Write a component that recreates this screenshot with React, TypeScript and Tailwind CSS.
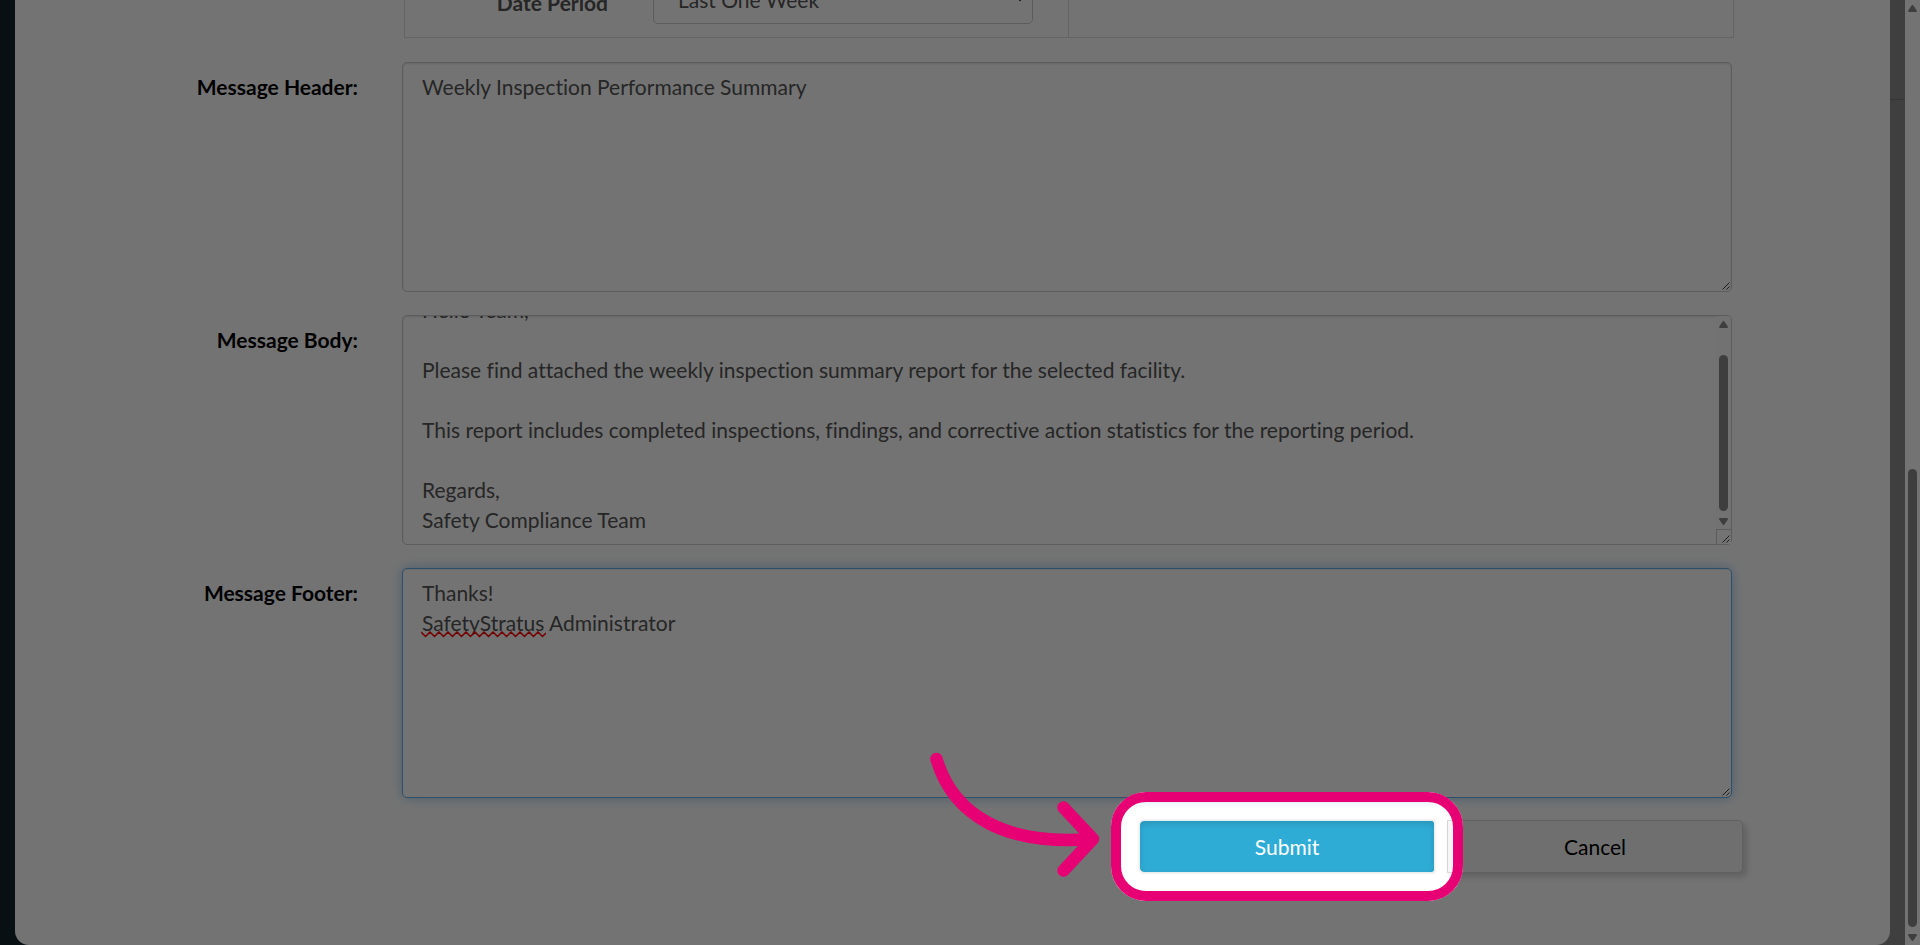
import React, { useEffect, useRef, useState } from "react";

const MESSAGE_BODY = [
  "Hello Team,",
  "",
  "Please find attached the weekly inspection summary report for the selected facility.",
  "",
  "This report includes completed inspections, findings, and corrective action statistics for the reporting period.",
  "",
  "Regards,",
  "Safety Compliance Team",
].join("\n");

const MESSAGE_FOOTER = "Thanks!\nSafetyStratus Administrator";

function ResizeGrip() {
  return (
    <svg
      aria-hidden="true"
      className="absolute right-0.5 bottom-0.5 w-2 h-2 pointer-events-none"
      viewBox="0 0 8 8"
      stroke="#444"
      strokeWidth="1"
    >
      <path d="M0.5 7.5L7.5 0.5M4.5 7.5L7.5 4.5" />
    </svg>
  );
}

function ScrollArrow({ down = false }: { down?: boolean }) {
  return (
    <svg
      aria-hidden="true"
      className={`w-[9px] h-[7px] shrink-0 ${down ? "rotate-180" : ""}`}
      viewBox="0 0 9 7"
      fill="#8b8b8b"
    >
      <path d="M3.6 0.6Q4.5 -0.4 5.4 0.6L8.8 5.4Q9.2 7 8 7H1Q-0.2 7 0.2 5.4Z" />
    </svg>
  );
}

function MessageField(props: {
  id: string;
  label: string;
  initial: string;
  active?: boolean;
  scrolled?: boolean;
  children?: React.ReactNode;
}) {
  const [value, setValue] = useState(props.initial);
  const areaRef = useRef<HTMLTextAreaElement | null>(null);

  useEffect(() => {
    if (props.scrolled && areaRef.current) {
      areaRef.current.scrollTop = areaRef.current.scrollHeight;
    }
  }, [props.scrolled]);

  return (
    <div className="flex items-start">
      <label
        htmlFor={props.id}
        className="w-[387px] shrink-0 pr-11 pt-2.5 text-right font-bold text-black"
      >
        {props.label}
      </label>
      <div className="relative flex-1 min-w-0">
        <textarea
          id={props.id}
          ref={areaRef}
          value={value}
          spellCheck={false}
          onChange={(e) => setValue(e.target.value)}
          className={`block w-full h-[230px] px-[19px] py-[9px] border rounded-[5px] bg-white text-[#555] resize-none overflow-hidden outline-none ${
            props.active
              ? "border-[#66afe9] shadow-[inset_0_1px_1px_rgba(0,0,0,0.075),0_0_12px_rgba(102,175,233,0.6)]"
              : "border-[#ccc] shadow-[inset_0_1px_2px_rgba(0,0,0,0.12)]"
          }`}
        />
        {props.children}
        <ResizeGrip />
      </div>
    </div>
  );
}

export default function App() {
  const [period, setPeriod] = useState("Last One Week");

  return (
    <div className="relative flex min-h-screen overflow-hidden bg-linear-to-r from-[#14242b] from-50% to-[#8c8c8c] to-50% font-['Lato',sans-serif] text-[21px] leading-[30px] [font-variant-ligatures:no-common-ligatures]">
      <div className="flex-1 min-w-0 flex px-[15px]">
        <form
          onSubmit={(e) => e.preventDefault()}
          className="flex-1 min-w-0 bg-white rounded-b-[14px] pr-[158px] pb-[72px]"
        >
          {/* Filter row, partly scrolled out of view */}
          <div className="ml-[389px] -mr-0.5 -mt-[38px] flex border border-[#ddd]">
            <div className="w-1/2 flex items-start py-[13px] pr-[35px] border-r border-[#ddd]">
              <label
                htmlFor="period"
                className="w-[203px] pt-3 text-right font-bold text-[#555]"
              >
                Date Period
              </label>
              <div className="relative flex-1 ml-[45px]">
                <select
                  id="period"
                  value={period}
                  onChange={(e) => setPeriod(e.target.value)}
                  className="block w-full h-12 pl-6 border border-[#ccc] rounded-[5px] bg-white text-[#555] appearance-none outline-none"
                >
                  <option>Last One Week</option>
                  <option>Last One Month</option>
                </select>
                <svg
                  aria-hidden="true"
                  className="absolute right-2 top-[18px] w-[10px] h-2 pointer-events-none"
                  viewBox="0 0 10 8"
                  fill="none"
                  stroke="#333"
                  strokeWidth="2"
                >
                  <path d="M1 1L5 6L9 1" />
                </svg>
              </div>
            </div>
          </div>

          <div className="mt-6 flex flex-col gap-[23px]">
            <MessageField
              id="header"
              label="Message Header:"
              initial="Weekly Inspection Performance Summary"
            />

            <MessageField
              id="body"
              label="Message Body:"
              initial={MESSAGE_BODY}
              scrolled
            >
              <div className="absolute right-px inset-y-px w-[15px] flex flex-col items-center pt-[5px] bg-[#fdfdfd] rounded-r-[4px] pointer-events-none">
                <ScrollArrow />
                <div className="w-[9px] flex-1 mt-[27px] mb-[7px] rounded-full bg-[#8b8b8b]" />
                <ScrollArrow down />
                <div className="w-full h-[15px] mt-1 border-l border-t border-[#ccc] bg-white" />
              </div>
            </MessageField>

            <MessageField
              id="footer"
              label="Message Footer:"
              initial={MESSAGE_FOOTER}
              active
            >
              {/* Spelling mark */}
              <svg
                aria-hidden="true"
                className="absolute left-[19px] top-[63px] w-[125px] h-[7px] pointer-events-none"
                viewBox="0 0 125 7"
                fill="none"
                stroke="#f00"
                strokeWidth="1.5"
              >
                <path d="M0 1L4.5 5.5L9 1L13.5 5.5L18 1L22.5 5.5L27 1L31.500 5.5L36 1L40.500 5.5L45 1L49.500 5.5L54 1L58.500 5.5L63 1L67.500 5.5L72 1L76.500 5.5L81 1L85.500 5.5L90 1L94.500 5.5L99 1L103.500 5.5L108 1L112.500 5.5L117 1L121.500 5.5L125 2" />
              </svg>
            </MessageField>
          </div>

          <div className="mt-[22px] -mr-[11px] flex justify-end gap-3">
            <div className="relative w-[296px]">
              <button
                type="submit"
                className="relative z-10 w-full h-[53px] border border-[#e9eef0] rounded-l-[5px] rounded-r-[3px] bg-[#2facd6] bg-clip-padding text-white shadow-[inset_0_3px_6px_rgba(0,0,0,0.14),0_0_2px_1px_rgba(0,0,0,0.06)]"
              >
                Submit
              </button>

              {/* Spotlight: everything outside the ring is dimmed */}
              <div className="absolute -inset-7 z-20 border-10 border-[#e60073] rounded-[35px] shadow-[0_0_0_2400px_rgba(0,0,0,0.55)] pointer-events-none" />
              <svg
                aria-hidden="true"
                className="absolute z-30 right-full mr-[34px] -top-[75px] w-[180px] h-[135px] pointer-events-none"
                viewBox="0 0 180 135"
                fill="none"
                stroke="#e60073"
                strokeWidth="12.5"
                strokeLinecap="round"
                strokeLinejoin="round"
              >
                <path d="M11.500 14C28 70 80 101 166 94" />
                <path d="M138.500 62.500L168 94L138.500 125.500" />
              </svg>
            </div>
            <button
              type="button"
              className="w-[296px] h-[53px] border border-[#d6d6d6] rounded-r-[5px] bg-[#f6f6f6] text-black shadow-[4px_4px_6px_rgba(0,0,0,0.16)]"
            >
              Cancel
            </button>
          </div>
        </form>
      </div>

      {/* Page scrollbar */}
      <div className="w-[15px] shrink-0 flex flex-col items-center pt-[5px] pb-1 bg-white">
        <ScrollArrow />
        <div className="w-[9px] h-[458px] mt-auto mb-[7px] rounded-full bg-[#8b8b8b]" />
        <ScrollArrow down />
      </div>
      <div className="absolute right-[15px] top-[99px] w-[15px] h-px bg-[#777]" />
    </div>
  );
}
